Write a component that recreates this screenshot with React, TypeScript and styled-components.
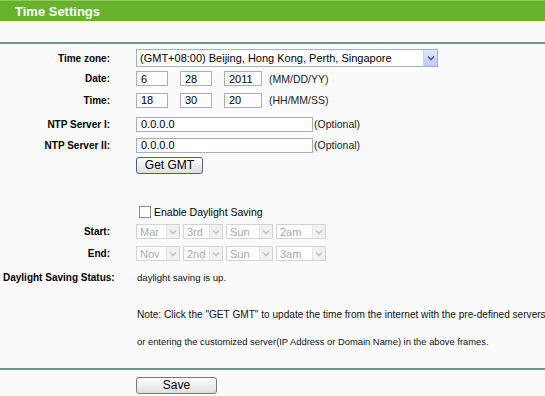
import React from "react";
import styled, { createGlobalStyle } from "styled-components";

const GlobalStyle = createGlobalStyle`
  html, body {
    margin: 0;
    padding: 0;
    background: #fbfbfb;
    font-family: "Liberation Sans", Arial, sans-serif;
    font-size: 11px;
    color: #000;
  }
`;

const Header = styled.div`
  height: 20px;
  background: #68b32e;
  border-top: 1px solid #8ccb5c;
  display: flex;
  align-items: center;
  padding-left: 15px;
  color: #fff;
  font-size: 13px;
  font-weight: bold;
`;

const Divider = styled.div<{ $top: number }>`
  height: 2px;
  background: #6d9789;
  margin-top: ${(p) => p.$top}px;
`;

const Form = styled.div`
  display: flex;
  flex-direction: column;
`;

const Row = styled.div<{ $h: number; $mt?: number }>`
  display: flex;
  align-items: center;
  height: ${(p) => p.$h}px;
  margin-top: ${(p) => p.$mt ?? 0}px;
`;

const Label = styled.div`
  width: 110px;
  text-align: right;
  font-weight: bold;
  font-size: 10px;
  margin-right: 26px;
  white-space: nowrap;
`;

const LeftLabel = styled.div`
  width: 134px;
  padding-left: 3px;
  font-weight: bold;
  font-size: 10px;
  white-space: nowrap;
`;

const StatusValue = styled.span`
  font-size: 9.6px;
  color: #111;
`;

const Field = styled.div`
  display: flex;
  align-items: center;
  gap: 12px;
`;

const TextBox = styled.div<{ $w: number }>`
  width: ${(p) => p.$w}px;
  height: 15px;
  box-sizing: border-box;
  border: 1px solid #a9aeb4;
  background: #fff;
  padding-left: 4px;
  display: flex;
  align-items: center;
  font-size: 11px;
`;

const Hint = styled.span`
  font-size: 10.5px;
  color: #222;
  margin-left: -5px;
`;

const Optional = styled.span`
  font-size: 10.5px;
  color: #222;
  margin-left: -11px;
`;

const SelectBox = styled.div<{ $w: number; $disabled?: boolean }>`
  width: ${(p) => p.$w}px;
  height: ${(p) => (p.$disabled ? 15 : 18)}px;
  box-sizing: border-box;
  border: 1px solid ${(p) => (p.$disabled ? "#d3d3d3" : "#9fb1c8")};
  background: #fff;
  display: flex;
  align-items: center;
  color: ${(p) => (p.$disabled ? "#a9a9a9" : "#000")};
  padding-left: 3px;
  font-size: 11px;
`;

const SelectText = styled.span`
  flex: 1;
  white-space: nowrap;
  overflow: hidden;
`;

const ArrowBtn = styled.div<{ $disabled?: boolean }>`
  width: ${(p) => (p.$disabled ? 13 : 14)}px;
  height: 100%;
  box-sizing: border-box;
  border-left: 1px solid ${(p) => (p.$disabled ? "#e6e6e6" : "#c3d3fb")};
  background: ${(p) =>
    p.$disabled ? "#f1f1f1" : "linear-gradient(#dfe8fd, #b7cbf6)"};
  display: flex;
  align-items: center;
  justify-content: center;
`;

const DstSelects = styled.div`
  display: flex;
  gap: 3px;
`;

const Button = styled.button<{ $w: number; $border: string }>`
  width: ${(p) => p.$w}px;
  height: 17px;
  padding: 0;
  border: 1px solid ${(p) => p.$border};
  border-radius: 3px;
  background: linear-gradient(#ffffff, #ececec 60%, #dedede);
  font-family: "Liberation Sans", Arial, sans-serif;
  font-size: 12px;
  color: #000;
  line-height: 15px;
`;

const Indent = styled.div`
  padding-left: 136px;
  display: flex;
  align-items: center;
  font-size: 10.5px;
`;

const Check = styled.span`
  width: 10px;
  height: 10px;
  border: 1px solid #8c8c8c;
  background: #fff;
  margin-left: 3px;
  margin-right: 3px;
`;

const NoteText = styled.div<{ $size: number }>`
  padding-left: 137px;
  font-size: ${(p) => p.$size}px;
  white-space: nowrap;
  color: #111;
`;

const Chevron: React.FC<{ color: string }> = ({ color }) => (
  <svg width="8" height="6" viewBox="0 0 8 6">
    <path d="M1 1.5 L4 4.5 L7 1.5" fill="none" stroke={color} strokeWidth="1.6" />
  </svg>
);

const Select: React.FC<{ w: number; value: string; disabled?: boolean }> = ({
  w,
  value,
  disabled,
}) => (
  <SelectBox $w={w} $disabled={disabled}>
    <SelectText>{value}</SelectText>
    <ArrowBtn $disabled={disabled}>
      <Chevron color={disabled ? "#c4c4c4" : "#4d6185"} />
    </ArrowBtn>
  </SelectBox>
);

const dst = {
  start: [
    { w: 44, v: "Mar" },
    { w: 40, v: "3rd" },
    { w: 47, v: "Sun" },
    { w: 50, v: "2am" },
  ],
  end: [
    { w: 44, v: "Nov" },
    { w: 40, v: "2nd" },
    { w: 47, v: "Sun" },
    { w: 50, v: "3am" },
  ],
};

export default function App() {
  return (
    <>
      <GlobalStyle />
      <Header>Time Settings</Header>
      <Divider $top={21} />
      <Form>
        <Row $h={22} $mt={3}>
          <Label>Time zone:</Label>
          <Select w={302} value="(GMT+08:00) Beijing, Hong Kong, Perth, Singapore" />
        </Row>
        <Row $h={19}>
          <Label>Date:</Label>
          <Field>
            <TextBox $w={32}>6</TextBox>
            <TextBox $w={32}>28</TextBox>
            <TextBox $w={38}>2011</TextBox>
            <Hint>(MM/DD/YY)</Hint>
          </Field>
        </Row>
        <Row $h={24}>
          <Label>Time:</Label>
          <Field>
            <TextBox $w={32}>18</TextBox>
            <TextBox $w={32}>30</TextBox>
            <TextBox $w={38}>20</TextBox>
            <Hint>(HH/MM/SS)</Hint>
          </Field>
        </Row>
        <Row $h={24}>
          <Label>NTP Server I:</Label>
          <Field>
            <TextBox $w={177}>0.0.0.0</TextBox>
            <Optional>(Optional)</Optional>
          </Field>
        </Row>
        <Row $h={18}>
          <Label>NTP Server II:</Label>
          <Field>
            <TextBox $w={177}>0.0.0.0</TextBox>
            <Optional>(Optional)</Optional>
          </Field>
        </Row>
        <Row $h={23}>
          <Indent>
            <Button $w={67} $border="#4a5f86">Get GMT</Button>
          </Indent>
        </Row>
        <Row $h={18} $mt={26}>
          <Indent>
            <Check />
            Enable Daylight Saving
          </Indent>
        </Row>
        <Row $h={21}>
          <Label>Start:</Label>
          <DstSelects>
            {dst.start.map((s, i) => (
              <Select key={i} w={s.w} value={s.v} disabled />
            ))}
          </DstSelects>
        </Row>
        <Row $h={23}>
          <Label>End:</Label>
          <DstSelects>
            {dst.end.map((s, i) => (
              <Select key={i} w={s.w} value={s.v} disabled />
            ))}
          </DstSelects>
        </Row>
        <Row $h={24}>
          <LeftLabel>Daylight Saving Status:</LeftLabel>
          <StatusValue>daylight saving is up.</StatusValue>
        </Row>
        <Row $h={20} $mt={15}>
          <NoteText $size={10.1}>
            Note: Click the "GET GMT" to update the time from the internet with the pre-defined servers
          </NoteText>
        </Row>
        <Row $h={20} $mt={7}>
          <NoteText $size={9.4}>
            or entering the customized server(IP Address or Domain Name) in the above frames.
          </NoteText>
        </Row>
      </Form>
      <Divider $top={17} />
      <Row $h={17} $mt={7}>
        <Indent>
          <Button $w={81} $border="#7a7a7a">Save</Button>
        </Indent>
      </Row>
    </>
  );
}
